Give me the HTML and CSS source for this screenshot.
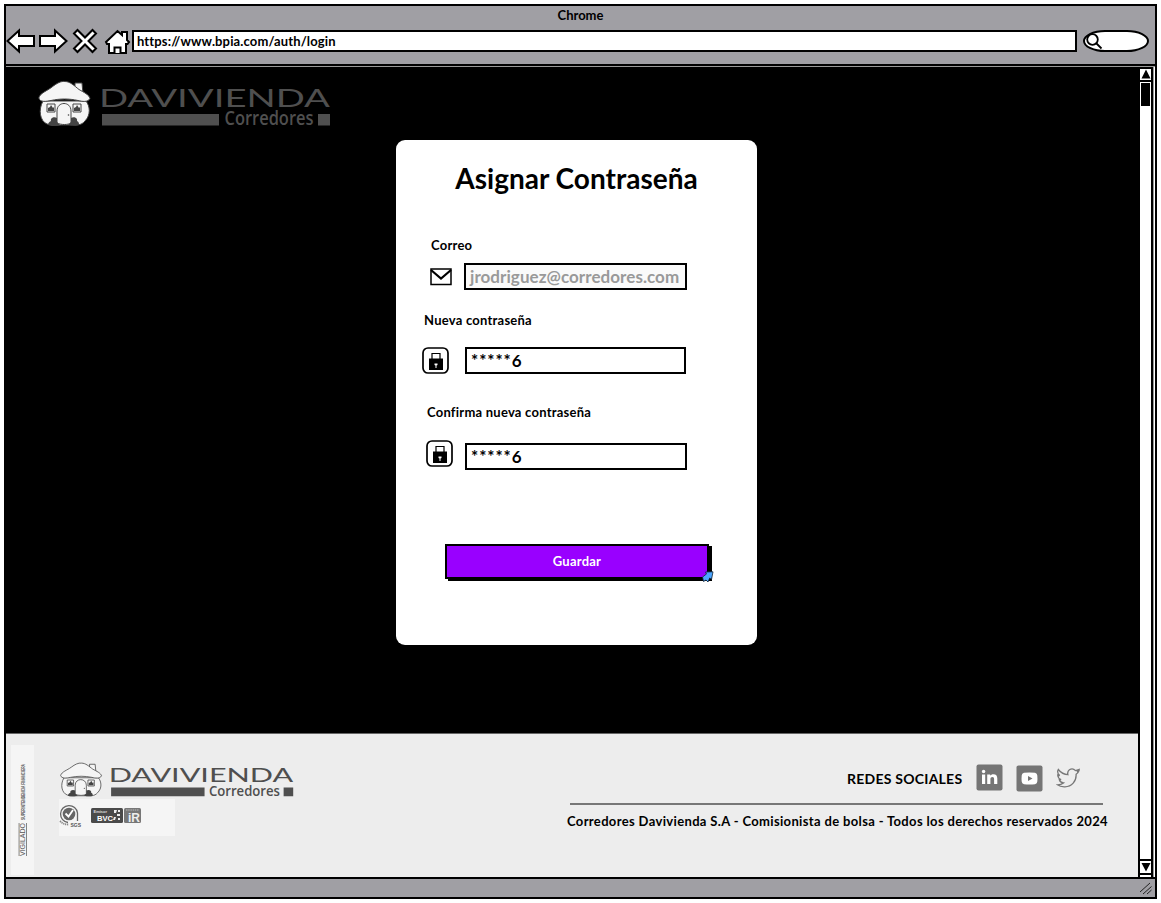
FILE: index.html
```html
<!DOCTYPE html>
<html lang="es">
<head>
<meta charset="utf-8">
<title>Asignar Contraseña</title>
<link rel="stylesheet" href="styles.css">
</head>
<body>
<svg class="defs" width="0" height="0">
  <symbol id="brand" viewBox="0 0 293 48" preserveAspectRatio="none">
    <g fill="var(--house)" stroke="var(--ink)" stroke-width="1">
      <path d="M37 9V3h7l1 11z"/>
      <path d="M5 21C0 30 2 41 9 44c5 2 9 1 14 1h9c6 0 11 1 15-4 6-6 5-15 1-20z"/>
      <path d="M.8 18C2 13 9 11 14 7 19 3 23 1 27 1.500c5 0 9 4 14 8 5 3 10 5 11 9-2 4-8 3-12 2-9-2-18-2-27 0-5 1-11 2-12.200-2.500z"/>
      <path d="M19 43V31c0-10 14-10 14 0v12c-3 2-10 2-14 0z"/>
      <path d="M9 24h8v8H9zM35 24h8v8h-8z"/>
    </g>
    <g fill="var(--ink)"><path d="M10 31v-3l2-1 1-2 2 3 1-1v4zM36 31v-3l2-1 1-2 2 3 1-1v4z"/><path d="M13 41c-1-3 3-5 6-3v4l3 3c-5 1-10 1-12 0 0-2 1-3 3-4zM39 41c1-3-3-5-6-3v4l-3 3c5 1 9 1 11 0 0-2 0-3-2-4z"/><circle cx="30.500" cy="35" r=".8"/></g>
    <g fill="var(--mark)">
      <text class="wordmark" x="61" y="27" textLength="231" lengthAdjust="spacingAndGlyphs">DAVIVIENDA</text>
      <path d="M64 34h117v11.500H64zM280 34h12v11.500h-12z"/>
      <text class="submark" x="186.500" y="45" textLength="89" lengthAdjust="spacingAndGlyphs">Corredores</text>
    </g>
  </symbol>
  <symbol id="lock" viewBox="0 0 27 27">
    <rect x="1" y="1" width="25" height="25" rx="5" fill="#fff" stroke="#000" stroke-width="1.700"/>
    <path d="M10 12V6.500h8V12" fill="none" stroke="#000" stroke-width="1.200"/>
    <path d="M7 11.500h14V23H7z"/>
    <path d="M12.500 16.500h3v1.500l-1 .5v2.500h-1v-2.500l-1-.5z" fill="#fff"/>
  </symbol>
</svg>

<div class="window">
  <header class="chrome">
    <div class="chrome-title">Chrome</div>
    <div class="toolbar">
      <svg class="nav" width="125" height="26" viewBox="0 0 125 26" fill="#fff" stroke="#000" stroke-width="2">
        <path d="M1.500 13 13 2.500V8h15v10H13v5.500z"/>
        <path d="M60.500 13 49 2.500V8H34v10h15v5.500z"/>
        <path d="m68 5.500 3.500-3.500 7.500 7.500L86.500 2 90 5.500 82.500 13l7.500 7.500-3.500 3.500-7.500-7.500-7.500 7.500-3.500-3.500 7.500-7.500z"/>
        <path d="M100 14 111.500 3l4.500 4V4h5v8l2 2-1.500 2H120v9h-17v-9h-2z"/>
        <path d="M108.500 25v-5.500h6V25"/>
      </svg>
      <div class="url">https://www.bpia.com/auth/login</div>
      <div class="search">
        <svg width="20" height="18" viewBox="0 0 20 18" fill="none" stroke="#000" stroke-width="1.800"><circle cx="7.500" cy="7.500" r="5.300"/><path d="m11.500 11.500 5 5"/></svg>
      </div>
    </div>
  </header>

  <div class="viewport">
    <div class="page">
      <main class="hero">
        <svg class="logo logo-top"><use href="#brand"/></svg>
        <form class="card">
          <h1>Asignar Contraseña</h1>
          <label class="lbl lbl-mail">Correo</label>
          <div class="row row-mail">
            <svg width="22" height="18" viewBox="0 0 22 18" fill="none" stroke="#000"><path d="M1 1h20v15.500H1z" stroke-width="1.500"/><path d="m1 2 10 8.500L21 2" stroke-width="2.200"/></svg>
            <div class="field muted">jrodriguez@corredores.com</div>
          </div>
          <label class="lbl lbl-new">Nueva contraseña</label>
          <div class="row row-new">
            <svg width="27" height="27"><use href="#lock"/></svg>
            <div class="field masked">*****6</div>
          </div>
          <label class="lbl lbl-confirm">Confirma nueva contraseña</label>
          <div class="row row-confirm">
            <svg width="27" height="27"><use href="#lock"/></svg>
            <div class="field masked">*****6</div>
          </div>
          <div class="save">Guardar
            <svg class="pointer" width="13" height="12" viewBox="0 0 13 12"><path d="M4.500 1 12 .8l-1.500 7.700-1.800-1.500L7 11l-2-2-2.500 1.500L1.500 6l4-3z" fill="#4da6ff" stroke="#123" stroke-width=".8"/></svg>
          </div>
        </form>
      </main>
      <footer class="footer">
        <div class="supervised">
          <svg width="23" height="130" viewBox="0 0 23 130">
            <g transform="rotate(-90)" fill="#555">
              <text class="vig" x="-111" y="14" textLength="33" lengthAdjust="spacingAndGlyphs">VIGILADO</text>
              <path d="M-111 15h33v.7h-33zM-111 7.700h33v.7h-33z"/>
              <text class="sup" x="-75" y="13.500" textLength="56" lengthAdjust="spacingAndGlyphs">SUPERINTENDENCIA FINANCIERA</text>
            </g>
          </svg>
        </div>
        <div class="brandbox">
          <svg class="logo logo-foot"><use href="#brand"/></svg>
          <div class="badges">
            <svg width="90" height="26" viewBox="0 0 90 26">
              <path d="M18.500 18V10A8.500 8.500 0 1 0 9 19.500" fill="none" stroke="#666" stroke-width="1.300"/>
              <circle cx="10" cy="11" r="6.300" fill="#666"/><path d="m6.500 10.500 3 3L14 7" fill="none" stroke="#fff" stroke-width="1.800"/>
              <path d="M1 18c3 3 5 3.500 9 3.500" fill="none" stroke="#888" stroke-width="1.800" stroke-dasharray="1.300 .7"/>
              <text x="11.500" y="23.500" class="tiny">SGS</text>
              <rect x="32" y="5" width="32" height="15" rx="1.500" fill="#4a4a4a"/>
              <text x="34.500" y="9.800" class="micro">Emisor</text>
              <text x="38" y="17.500" class="bvc" textLength="16" lengthAdjust="spacingAndGlyphs">BVC</text>
              <path d="M55 7h3l-1 3h-2zM59 7h2v2h-2zM58 11h3v2h-3zM55 14h2l-1 3h-2zM59 15h2v2h-2z" fill="#eee"/>
              <rect x="65" y="5" width="17" height="15" rx="1.500" fill="#777"/>
              <path d="M67 7h13" stroke="#bbb" stroke-width="1.200" stroke-dasharray="1.500 .7"/>
              <text x="69" y="19" class="ir">iR</text>
            </svg>
          </div>
        </div>
        <div class="info">
          <div class="social">
            <span class="social-title">REDES SOCIALES</span>
            <svg width="27" height="27" viewBox="0 0 27 27"><rect x=".5" y=".5" width="26" height="26" rx="2" fill="#757575"/><path d="M6 10.500h3.200V20H6zM11.200 10.500h3v1.300c.8-1 1.800-1.500 3.200-1.500 2.700 0 3.900 1.500 3.900 4.200V20h-3.200v-5c0-1.300-.5-2.100-1.700-2.100s-2 .8-2 2.100v5h-3.200z" fill="#fff"/><circle cx="7.600" cy="7.500" r="1.700" fill="#fff"/></svg>
            <svg class="youtube" width="27" height="27" viewBox="0 0 27 27"><rect x=".5" y=".5" width="26" height="26" rx="2" fill="#757575"/><path d="M8 7.800q5.500-.8 11 0 2.200.5 2.300 2.700.3 3 0 6-.1 2.200-2.300 2.700-5.500.8-11 0-2.200-.5-2.300-2.700-.3-3 0-6Q5.800 8.300 8 7.800z" fill="#fff"/><path d="m12 11 4.500 2.500L12 16z" fill="#757575"/></svg>
            <svg class="twitter" width="24" height="21" viewBox="0 0 24 21" fill="none" stroke="#777" stroke-width="1.300"><path d="M22.800 3q-.7 2-2.700 3.300c.5 7-4.600 12.500-11.100 12.500q-4.800.2-7.500-2 3.700 0 6-1.800-3.300-.5-4.200-3.200l1.800-.2Q2 10.600 1.700 7l2 .5Q.5 4.800 2.300 1.500q4 5 9.600 5.200-.8-3.200 1.500-4.900 3.300-2.200 6.100.8l3.300-1-1.800 2.200z"/></svg>
          </div>
          <div class="rule"></div>
          <p class="legal">Corredores Davivienda S.A - Comisionista de bolsa - Todos los derechos reservados 2024</p>
        </div>
      </footer>
    </div>
    <aside class="scrollbar">
      <div class="arrow"><svg width="10" height="10" viewBox="0 0 10 10"><path d="M5 .5 9.500 9.500H.5z"/></svg></div>
      <div class="track"><div class="thumb"></div></div>
      <div class="arrow arrow-down"><svg width="10" height="10" viewBox="0 0 10 10"><path d="M5 9.500.5 1h9z"/></svg></div>
    </aside>
  </div>
  <div class="status"><svg width="12" height="13" viewBox="0 0 12 13" stroke="#222" stroke-width="1"><path d="M0 10 10 1M3 12l8.500-7.500M7 12l4.500-4"/></svg></div>
</div>
</body>
</html>
```
FILE: styles.css
```css
* { box-sizing: border-box; }
body { margin: 0; padding: 4px; background: #fff; color: #000; font: 700 13px/16px Lato, sans-serif; font-variant-ligatures: none; letter-spacing: .24px; }
svg { display: block; flex: none; letter-spacing: 0; }
.defs { position: absolute; }
.window { width: 1153px; height: 895px; border: 2px solid #000; display: flex; flex-direction: column; }
.chrome { height: 60px; background: #a09fa4; border-bottom: 2px solid #000; }
.chrome-title { height: 22px; padding-top: 1px; text-align: center; letter-spacing: 0; }
.toolbar { display: flex; align-items: center; height: 26px; }
.url { width: 945px; height: 22px; margin-left: 1px; border: 2px solid #000; background: #fff; padding: 1px 3px; letter-spacing: .13px; line-height: 16px; }
.search { width: 66px; height: 22px; margin-left: 6px; border: 2px solid #000; border-radius: 22px / 11px; background: #fff; }
.viewport { height: 811px; display: flex; border-top: 1px solid #999; }
.page { width: 1134px; }
.hero { height: 667px; background: #000; border-bottom: 1px solid #666; padding: 13px 0 0 32px; }
.logo { --ink: #444; --mark: #4f4f4f; }
.logo-top { --house: #f5f5f5; width: 293px; height: 48px; }
.wordmark { font: 400 25.500px Lato, sans-serif; }
.submark { font: 600 20px "Open Sans", sans-serif; }
.card { width: 361px; height: 505px; margin: 12px 0 0 358px; background: #fff; border-radius: 9px; padding-top: 21px; }
h1 { margin: 0; font: 700 28px/34px Lato, sans-serif; text-align: center; letter-spacing: 0; }
.lbl { display: block; height: 16px; }
.lbl-mail { margin: 42px 0 0 35px; }
.lbl-new { margin: 22px 0 0 28px; }
.lbl-confirm { margin: 30px 0 0 31px; }
.row { display: flex; }
.row-mail { margin: 10px 0 0 34px; align-items: center; gap: 12px; }
.row-new { margin: 19px 0 0 26px; gap: 16px; }
.row-confirm { margin: 20px 0 0 30px; gap: 12px; }
.row-confirm .field { margin-top: 3px; width: 222px; }
.field { width: 221px; height: 27px; border: 2px solid #000; font-size: 17px; line-height: 24px; padding-left: 4px; white-space: nowrap; letter-spacing: .06px; }
.masked { letter-spacing: .9px; }
.muted { width: 223px; color: #999; background: #fafafa; }
.save { position: relative; width: 264px; height: 35px; margin: 74px 0 0 49px; background: #90f; color: #fff; border: 2px solid #000; box-shadow: 3px 2px 0 #000; text-align: center; line-height: 31px; }
.pointer { position: absolute; right: -7px; bottom: -6px; }
.footer { height: 143px; background: #ededed; display: flex; }
.supervised { width: 23px; height: 130px; margin: 11px 0 0 5px; background: #f5f5f5; }
.vig { font: 400 7px "Liberation Sans", sans-serif; }
.sup { font: 700 5px "Liberation Sans", sans-serif; }
.brandbox { width: 236px; margin: 28px 0 0 25px; }
.logo-foot { --house: #f5f5f5; width: 234px; height: 36px; margin-left: 1px; }
.badges { width: 116px; height: 37px; background: #f5f5f5; padding-top: 4px; margin-top: 1px; }
.tiny { font: 700 5px "Liberation Sans", sans-serif; fill: #555; }
.micro { font: 700 4px "Liberation Sans", sans-serif; fill: #ddd; }
.bvc { font: 700 7.500px "Liberation Sans", sans-serif; fill: #fff; }
.ir { font: 700 12px "Liberation Sans", sans-serif; fill: #eee; }
.info { width: 560px; margin-left: 264px; padding-top: 30px; }
.social { display: flex; height: 29px; padding-left: 288px; }
.social-title { width: 129px; padding-top: 7px; font-size: 14px; white-space: nowrap; }
.youtube { margin: 1px 0 0 13px; }
.twitter { margin: 4px 0 0 13px; }
.rule { width: 533px; height: 2px; background: #777; margin: 10px 0 0 11px; }
.legal { margin: 8px 0 0 8px; white-space: nowrap; letter-spacing: .35px; }
.scrollbar { width: 15px; margin-left: -2px; border: solid #000; border-width: 0 2px; background: #fff; display: flex; flex-direction: column; box-shadow: 1px 0 0 #999; }
.arrow { height: 15px; border: solid #000; border-width: 2px 0; padding-left: 1px; }
.arrow-down { height: 16px; border-bottom-width: 2px; padding-top: 1px; margin-bottom: 2px; }
.track { flex: 1; padding: 1px; }
.thumb { height: 23px; background: #000; }
.status { flex: 1; border-top: 2px solid #000; background: #a09fa4; display: flex; justify-content: flex-end; padding: 3px 3px 0 0; }
```
